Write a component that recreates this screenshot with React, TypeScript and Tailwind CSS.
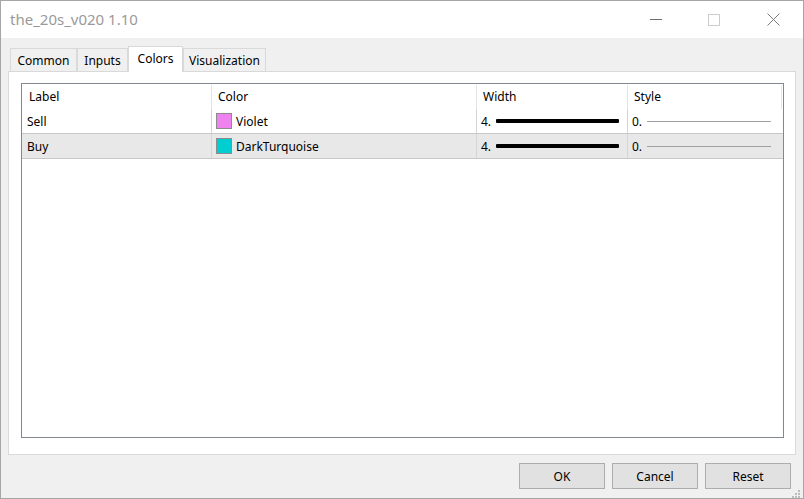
import React from "react";

const font = { fontFamily: '"Segoe UI", "Noto Sans", "Liberation Sans", sans-serif' };

const tabs = [
  { name: "Common", w: "w-[67px]" },
  { name: "Inputs", w: "w-[51px]" },
  { name: "Colors", w: "w-[55px]", active: true },
  { name: "Visualization", w: "w-[83px]" },
];

const rows = [
  { label: "Sell", color: "Violet", swatch: "bg-[#ee82ee]", selected: false },
  { label: "Buy", color: "DarkTurquoise", swatch: "bg-[#00ced1]", selected: true },
];

export default function App() {
  return (
    <div
      className="w-[804px] h-[499px] border border-[#a6a6a6] flex flex-col bg-[#f0f0f0] text-[12px] text-black overflow-hidden"
      style={font}
    >
      <TitleBar />
      <div className="flex-1 flex flex-col pt-[8px]">
        <div className="flex items-end h-[25px] ml-[9px]">
          {tabs.map((t) =>
            t.active ? (
              <div
                key={t.name}
                className={`${t.w} h-[26px] -mb-px relative z-10 bg-white border border-b-0 border-[#d9d9d9] flex items-center justify-center pb-[2px]`}
              >
                {t.name}
              </div>
            ) : (
              <div
                key={t.name}
                className={`${t.w} h-[23px] bg-[#f0f0f0] border border-b-0 border-[#d9d9d9] flex items-center justify-center pt-px`}
              >
                {t.name}
              </div>
            )
          )}
        </div>
        <div className="ml-[7px] w-[788px] h-[384px] bg-white border border-[#d9d9d9] pt-[11px] pl-[12px]">
          <Table />
        </div>
        <div className="flex justify-end gap-[7px] mt-[8px] mr-[12px]">
          {["OK", "Cancel", "Reset"].map((b) => (
            <button
              key={b}
              className="w-[86px] h-[26px] bg-[#e1e1e1] border border-[#adadad] flex items-center justify-center pt-px"
            >
              {b}
            </button>
          ))}
        </div>
        <div className="flex justify-end mr-[2px] mt-px">
          <svg width="10" height="8" viewBox="0 0 10 8">
            <g fill="#bcbcbc">
              <rect x="7" y="0" width="2" height="2" />
              <rect x="4" y="3" width="2" height="2" />
              <rect x="7" y="3" width="2" height="2" />
              <rect x="1" y="6" width="2" height="2" />
              <rect x="4" y="6" width="2" height="2" />
              <rect x="7" y="6" width="2" height="2" />
            </g>
          </svg>
        </div>
      </div>
    </div>
  );
}

function TitleBar() {
  return (
    <div className="h-[37px] bg-white flex items-center shrink-0">
      <span className="ml-[9px] text-[15px] text-[#9a9a9a]">the_20s_v020 1.10</span>
      <div className="ml-auto mr-[23px] flex items-center">
        <div className="w-[12px] h-px bg-[#6e6e6e]" />
        <div className="ml-[46px] w-[12px] h-[12px] border border-[#cccccc]" />
        <svg className="ml-[47px]" width="13" height="13" viewBox="0 0 13 13">
          <path d="M0.5 0.5 L12.5 12.5 M12.5 0.5 L0.5 12.5" stroke="#7a7a7a" strokeWidth="1" />
        </svg>
      </div>
    </div>
  );
}

function Table() {
  return (
    <div className="w-[763px] h-[355px] border border-[#828790] bg-white">
      <div className="flex h-[25px] pt-px">
        <HeadCell className="w-[190px] pl-[7px]">Label</HeadCell>
        <HeadCell className="w-[265px] pl-[6px]">Color</HeadCell>
        <HeadCell className="w-[151px] pl-[6px]">Width</HeadCell>
        <HeadCell className="w-[154px] pl-[6px]">Style</HeadCell>
      </div>
      {rows.map((r) => (
        <div
          key={r.label}
          className={`flex h-[25px] border-b border-[#c8c8c8] ${r.selected ? "bg-[#e8e8e8]" : "bg-white"}`}
        >
          <div className="w-[190px] pl-[5px] pt-px border-r border-[#d5d5d5] flex items-center">{r.label}</div>
          <div className="w-[265px] pl-[4px] border-r border-[#d5d5d5] flex items-center">
            <span className={`w-[16px] h-[16px] border border-[#8c8c8c] ${r.swatch}`} />
            <span className="ml-[4px] pt-px">{r.color}</span>
          </div>
          <div className="w-[151px] pl-[4px] border-r border-[#d5d5d5] flex items-center">
            <span className="pt-px">4.</span>
            <span className="ml-[5px] w-[123px] h-[4px] bg-black rounded-[1px]" />
          </div>
          <div className="w-[154px] pl-[4px] flex items-center">
            <span className="pt-px">0.</span>
            <span className="ml-[5px] w-[124px] h-px bg-[#a0a0a0]" />
          </div>
        </div>
      ))}
    </div>
  );
}

function HeadCell({ className, children }: { className: string; children: React.ReactNode }) {
  return (
    <div className={`${className} border-r border-[#e5e5e5] flex items-center`}>{children}</div>
  );
}
